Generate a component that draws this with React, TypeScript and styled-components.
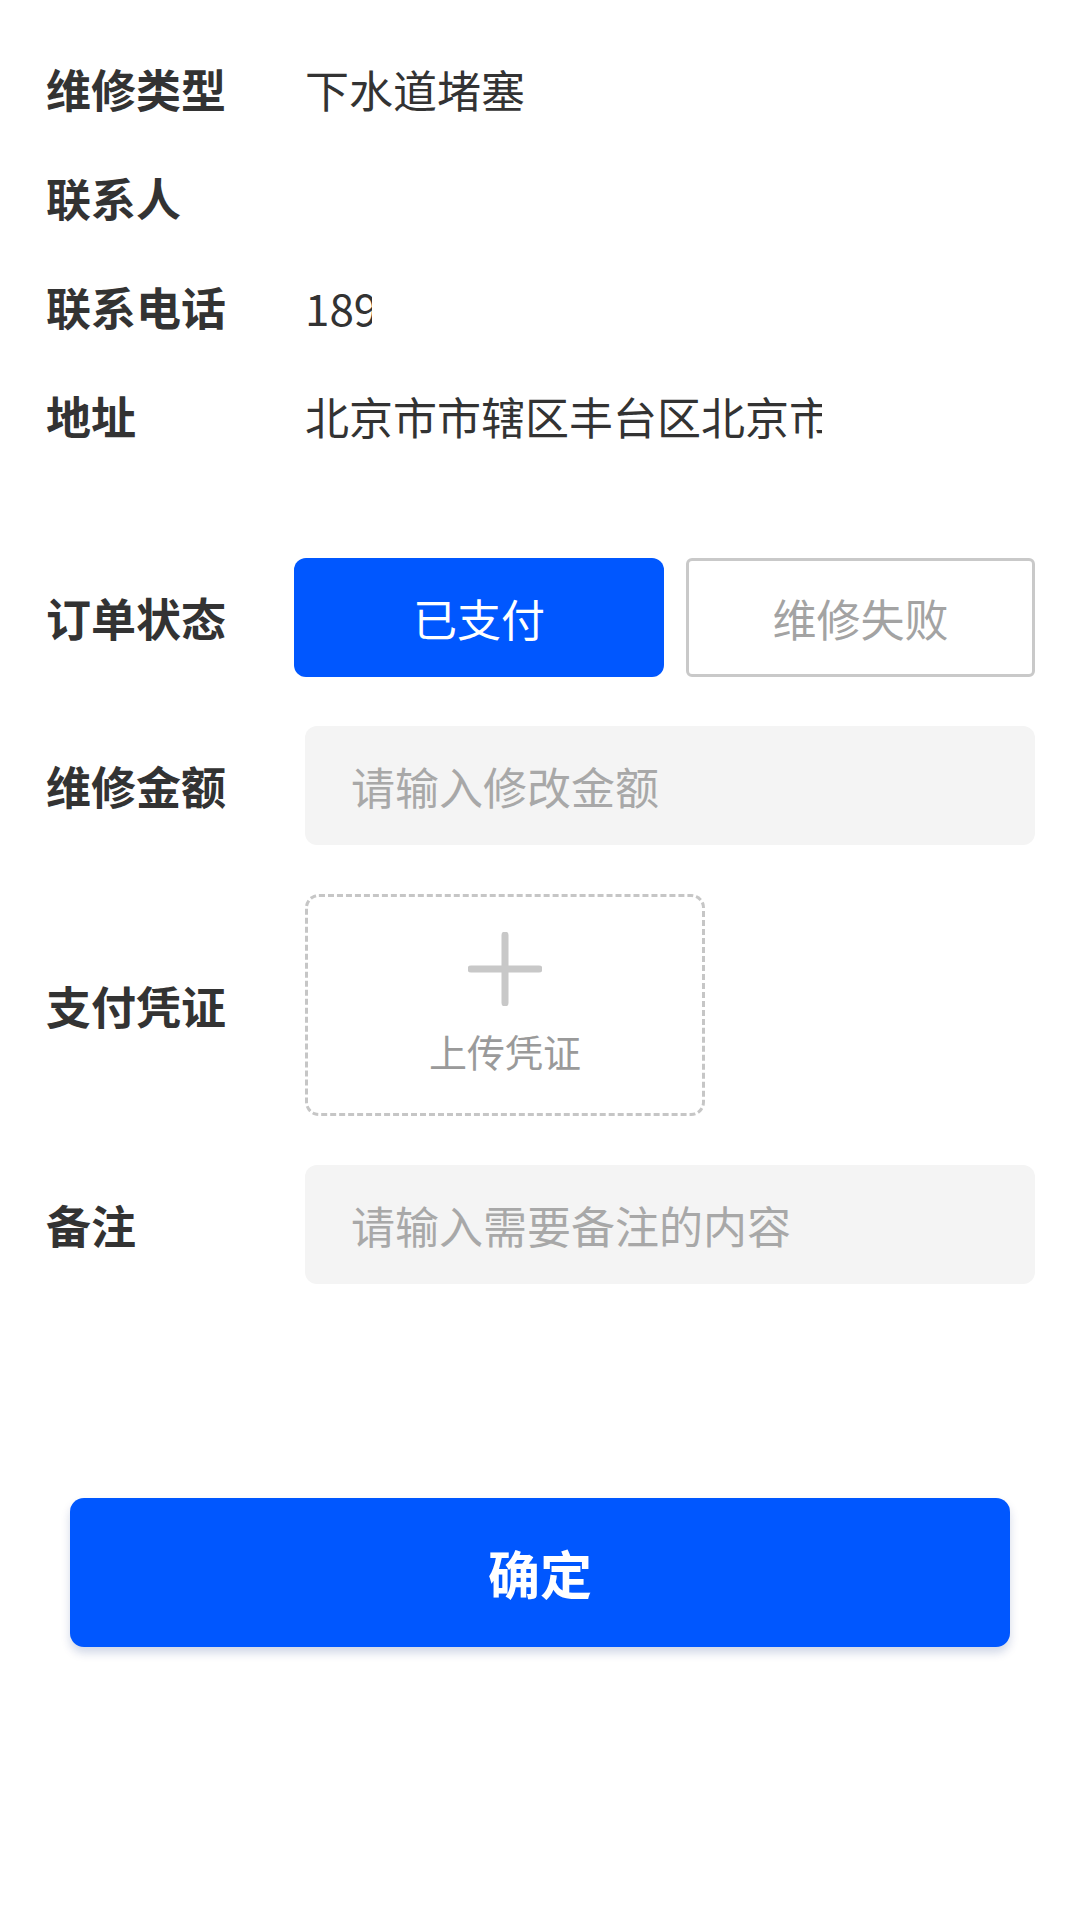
import React, { useState } from 'react';
import styled, { createGlobalStyle } from 'styled-components';

const GlobalStyle = createGlobalStyle`
  html, body {
    margin: 0;
    padding: 0;
    background: #ffffff;
  }

  body {
    font-family: 'Noto Sans CJK SC', 'Noto Sans', sans-serif;
    color: #333333;
  }

  * {
    box-sizing: border-box;
  }
`;

const Page = styled.div`
  width: 1080px;
  min-height: 1920px;
  padding: 34px 45px 0 46px;
`;

const InfoList = styled.div`
  display: flex;
  flex-direction: column;
`;

const InfoRow = styled.div`
  display: grid;
  grid-template-columns: 259px 1fr;
  align-items: center;
  height: 109px;
`;

const Label = styled.span`
  font-size: 45px;
  font-weight: 700;
  color: #333333;
  line-height: 1;
  white-space: nowrap;
`;

const Value = styled.span<{ $clip?: number }>`
  font-size: 44px;
  color: #333333;
  line-height: 1.5;
  white-space: nowrap;
  overflow: ${(p) => (p.$clip ? 'hidden' : 'visible')};
  max-width: ${(p) => (p.$clip ? `${p.$clip}px` : 'none')};
`;

const Form = styled.div`
  display: flex;
  flex-direction: column;
  gap: 49px;
  margin-top: 88px;
`;

const FormRow = styled.div<{ $labelWidth?: number }>`
  display: grid;
  grid-template-columns: ${(p) => p.$labelWidth ?? 259}px 1fr;
  align-items: center;
`;

const StatusGroup = styled.div`
  display: grid;
  grid-template-columns: 370px 1fr;
  gap: 22px;
`;

const StatusButton = styled.button<{ $active?: boolean }>`
  height: 119px;
  border-radius: ${(p) => (p.$active ? '12px' : '6px')};
  border: ${(p) => (p.$active ? 'none' : '3px solid #c9c9c9')};
  background: ${(p) => (p.$active ? '#0057ff' : '#ffffff')};
  color: ${(p) => (p.$active ? '#ffffff' : '#a3a3a3')};
  font-family: inherit;
  font-size: 44px;
  padding: 0;
  cursor: pointer;
`;

const TextInput = styled.input`
  width: 100%;
  height: 119px;
  border: none;
  outline: none;
  border-radius: 12px;
  background: #f4f4f4;
  padding: 0 46px;
  font-family: inherit;
  font-size: 44px;
  color: #333333;

  &::placeholder {
    color: #a8a8a8;
  }
`;

const UploadBox = styled.div`
  width: 400px;
  height: 222px;
  border: 3px dashed #c6c6c6;
  border-radius: 14px;
  display: flex;
  flex-direction: column;
  align-items: center;
  gap: 26px;
  padding-top: 35px;
  cursor: pointer;
`;

const UploadText = styled.span`
  font-size: 38px;
  color: #9a9a9a;
  line-height: 1;
`;

const ConfirmButton = styled.button`
  display: block;
  width: 940px;
  height: 149px;
  margin: 214px 0 0 24px;
  border: none;
  border-radius: 14px;
  background: #0057ff;
  color: #ffffff;
  font-family: inherit;
  font-size: 52px;
  font-weight: 700;
  box-shadow: 0 6px 10px rgba(0, 40, 120, 0.18);
  cursor: pointer;
`;

const PlusIcon: React.FC = () => (
  <svg width="74" height="74" viewBox="0 0 74 74">
    <path
      d="M37 3 V71 M3 37 H71"
      stroke="#c8c8c8"
      strokeWidth="7"
      strokeLinecap="round"
      fill="none"
    />
  </svg>
);

const info = [
  { label: '维修类型', value: '下水道堵塞' },
  { label: '联系人', value: '' },
  { label: '联系电话', value: '189', clip: 67 },
  { label: '地址', value: '北京市市辖区丰台区北京市', clip: 517 },
];

const App: React.FC = () => {
  const [status, setStatus] = useState('paid');
  const [amount, setAmount] = useState('');
  const [remark, setRemark] = useState('');

  return (
    <Page>
      <GlobalStyle />
      <InfoList>
        {info.map((item) => (
          <InfoRow key={item.label}>
            <Label>{item.label}</Label>
            <Value $clip={item.clip}>{item.value}</Value>
          </InfoRow>
        ))}
      </InfoList>

      <Form>
        <FormRow $labelWidth={248}>
          <Label>订单状态</Label>
          <StatusGroup>
            <StatusButton $active={status === 'paid'} onClick={() => setStatus('paid')}>
              已支付
            </StatusButton>
            <StatusButton $active={status === 'failed'} onClick={() => setStatus('failed')}>
              维修失败
            </StatusButton>
          </StatusGroup>
        </FormRow>

        <FormRow>
          <Label>维修金额</Label>
          <TextInput
            placeholder="请输入修改金额"
            value={amount}
            onChange={(e) => setAmount(e.target.value)}
          />
        </FormRow>

        <FormRow>
          <Label>支付凭证</Label>
          <UploadBox>
            <PlusIcon />
            <UploadText>上传凭证</UploadText>
          </UploadBox>
        </FormRow>

        <FormRow>
          <Label>备注</Label>
          <TextInput
            placeholder="请输入需要备注的内容"
            value={remark}
            onChange={(e) => setRemark(e.target.value)}
          />
        </FormRow>
      </Form>

      <ConfirmButton>确定</ConfirmButton>
    </Page>
  );
};

export default App;
